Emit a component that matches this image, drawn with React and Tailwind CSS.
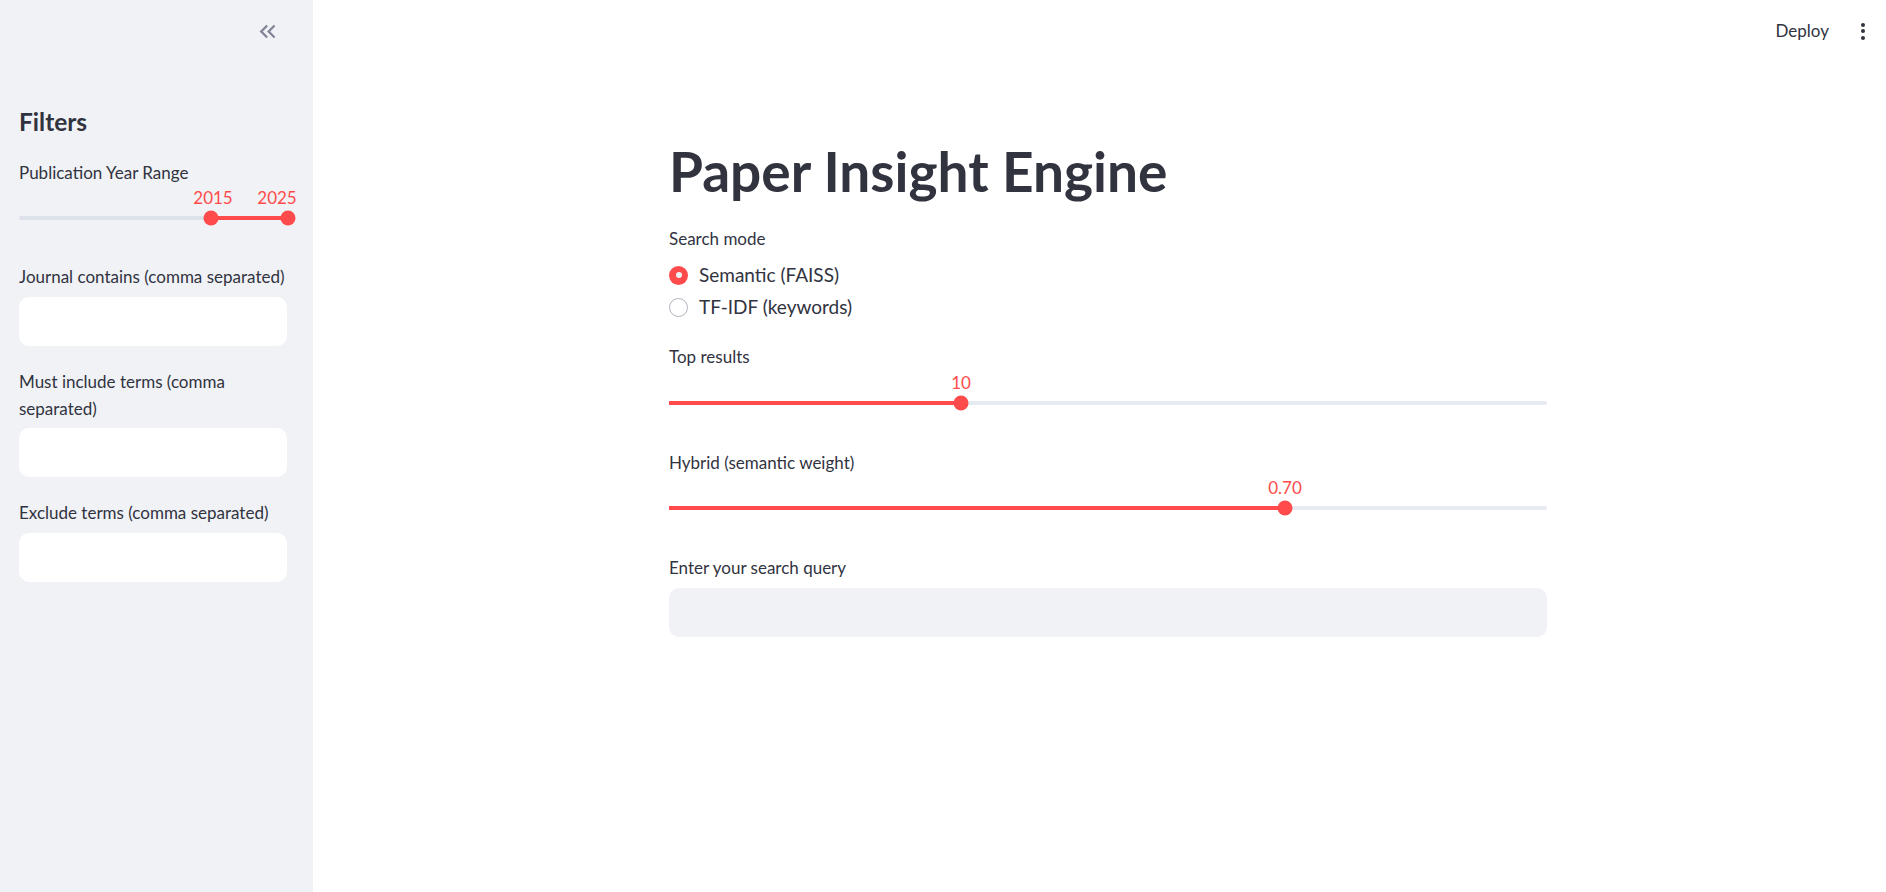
import React from "react";

function Slider({ fillLeft, fillWidth, thumbs, labels, trackClass }) {
  return (
    <div className="relative h-[44px] w-full">
      <div className={`absolute left-0 right-0 top-[31px] h-[4px] rounded-full ${trackClass}`} />
      <div
        className="absolute top-[31px] h-[4px] bg-[#ff4b4b]"
        style={{ left: fillLeft, width: fillWidth }}
      />
      {thumbs.map((t, i) => (
        <div
          key={i}
          className="absolute top-[33px] h-[15px] w-[15px] -translate-x-1/2 -translate-y-1/2 rounded-full bg-[#ff4b4b]"
          style={{ left: t }}
        />
      ))}
      {labels.map((l, i) => (
        <div
          key={i}
          className="absolute top-[1px] h-[24px] -translate-x-1/2 whitespace-nowrap text-[17px] leading-[24px] text-[#ff4b4b]"
          style={{ left: l.left }}
        >
          {l.text}
        </div>
      ))}
    </div>
  );
}

function Label({ children, className = "" }) {
  return (
    <div className={`h-[24px] whitespace-nowrap text-[17px] leading-[24px] text-[#31333f] ${className}`}>
      {children}
    </div>
  );
}

function DoubleChevron() {
  return (
    <svg width="27" height="27" viewBox="0 0 24 24" fill="#808495">
      <path d="M17.59 18L19 16.59 14.42 12 19 7.41 17.59 6l-6 6z" />
      <path d="M11 18l1.41-1.41L7.83 12l4.58-4.59L11 6l-6 6z" />
    </svg>
  );
}

export default function App() {
  return (
    <div className="flex h-[892px] w-full overflow-hidden bg-white font-['Lato',sans-serif] text-[#31333f]">
      {/* Sidebar */}
      <aside className="flex w-[313px] shrink-0 flex-col bg-[#f0f2f6] pl-[19px] pr-[26px]">
        <div className="flex h-[62px] items-center justify-end pr-[6px]">
          <DoubleChevron />
        </div>
        <div className="mt-[42px] h-[36px] text-[24.5px] font-bold leading-[36px] text-[#31333f]">
          Filters
        </div>
        <Label className="mt-[21px]">Publication Year Range</Label>
        <div>
          <Slider
            trackClass="bg-[#dde1ea]"
            fillLeft="192px"
            fillWidth="77px"
            thumbs={["192px", "269px"]}
            labels={[
              { left: "194px", text: "2015" },
              { left: "258px", text: "2025" },
            ]}
          />
        </div>
        <Label className="mt-[36px]">Journal contains (comma separated)</Label>
        <div className="mt-[8px] h-[49px] w-full rounded-[10px] bg-white" />
        <div className="mt-[22px] text-[17px] leading-[27px] text-[#31333f]">
          Must include terms (comma
          <br />
          separated)
        </div>
        <div className="mt-[6px] h-[49px] w-full rounded-[10px] bg-white" />
        <Label className="mt-[24px]">Exclude terms (comma separated)</Label>
        <div className="mt-[8px] h-[49px] w-full rounded-[10px] bg-white" />
      </aside>

      {/* Main */}
      <main className="flex min-w-0 flex-1 flex-col">
        <header className="flex h-[62px] items-center justify-end pr-[21px]">
          <span className="text-[17px] leading-[24px] text-[#31333f]">Deploy</span>
          <div className="ml-[32px] flex flex-col items-center gap-[2.5px]">
            <span className="h-[4px] w-[4px] rounded-full bg-[#31333f]" />
            <span className="h-[4px] w-[4px] rounded-full bg-[#31333f]" />
            <span className="h-[4px] w-[4px] rounded-full bg-[#31333f]" />
          </div>
        </header>

        <div className="ml-[356px] flex w-[878px] flex-col">
          <h1 className="mt-[76px] h-[66px] whitespace-nowrap text-[55px] font-bold leading-[66px] text-[#31333f]">
            Paper Insight Engine
          </h1>

          <Label className="mt-[23px]">Search mode</Label>

          <div className="mt-[8px] flex flex-col">
            <div className="flex h-[32px] items-center">
              <span className="flex h-[19px] w-[19px] items-center justify-center rounded-full bg-[#ff4b4b]">
                <span className="h-[6px] w-[6px] rounded-full bg-[#f0f2f6]" />
              </span>
              <span className="ml-[11px] text-[19px] leading-[28px] text-[#31333f]">Semantic (FAISS)</span>
            </div>
            <div className="flex h-[32px] items-center">
              <span className="h-[19px] w-[19px] rounded-full border border-[#b0b3bd] bg-white" />
              <span className="ml-[11px] text-[19px] leading-[28px] text-[#31333f]">TF-IDF (keywords)</span>
            </div>
          </div>

          <Label className="mt-[22px]">Top results</Label>
          <div className="mt-[1px]">
            <Slider
              trackClass="bg-[#e6eaf1]"
              fillLeft="0px"
              fillWidth="292px"
              thumbs={["292px"]}
              labels={[{ left: "292px", text: "10" }]}
            />
          </div>

          <Label className="mt-[37px]">Hybrid (semantic weight)</Label>
          <Slider
            trackClass="bg-[#e6eaf1]"
            fillLeft="0px"
            fillWidth="616px"
            thumbs={["616px"]}
            labels={[{ left: "616px", text: "0.70" }]}
          />

          <Label className="mt-[37px]">Enter your search query</Label>
          <div className="mt-[8px] h-[49px] w-full rounded-[10px] bg-[#f0f2f6]" />
        </div>
      </main>
    </div>
  );
}
